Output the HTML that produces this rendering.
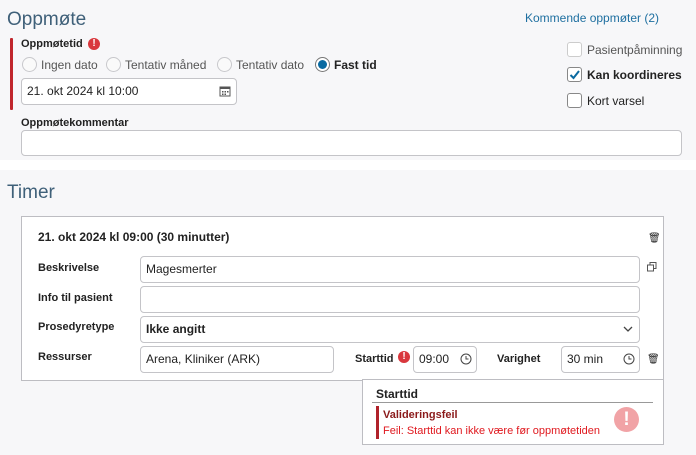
<!DOCTYPE html><html><head><style>
*{box-sizing:border-box;margin:0;padding:0}
body{width:696px;height:455px;background:#fff;font-family:"Liberation Sans",sans-serif;font-size:12px;color:#222;position:relative;overflow:hidden}
.sec{position:absolute;left:0;width:696px;background:#f7f7f9}
.a{position:absolute;white-space:nowrap}
.h{font-size:19px;color:#3f6079}
.b{font-weight:bold}
.in{position:absolute;background:#fff;border:1px solid #c4c4c8;border-radius:4px;height:27px;line-height:25px;padding-left:5px;font-size:12px}
.rad{position:absolute;width:15px;height:15px;border:1px solid #c8c8cc;border-radius:50%;background:#fafafa}
.cb{position:absolute;width:15px;height:15px;border:1px solid #888;border-radius:3px;background:#fff}
.err{position:absolute;width:12px;height:12px;border-radius:50%;background:#d9373d;color:#fff;font-size:10px;font-weight:bold;text-align:center;line-height:12px}
</style></head><body>
<div class="sec" style="top:0;height:160px"></div>
<div class="sec" style="top:170px;height:285px"></div>
<div class="a h" style="left:7px;top:9px">Oppmøte</div>
<div class="a" style="left:525px;top:11px;color:#1e6fa0">Kommende oppmøter (2)</div>
<div class="a" style="left:10px;top:38px;width:3px;height:72px;background:#c0262d;border-radius:1px"></div>
<div class="a b" style="left:21px;top:38px;font-size:11px">Oppmøtetid</div>
<div class="err" style="left:88px;top:38px">!</div>
<div class="rad" style="left:22px;top:57px"></div><div class="a" style="left:41px;top:58px;color:#555">Ingen dato</div>
<div class="rad" style="left:106px;top:57px"></div><div class="a" style="left:125px;top:58px;color:#555">Tentativ måned</div>
<div class="rad" style="left:217px;top:57px"></div><div class="a" style="left:236px;top:58px;color:#555">Tentativ dato</div>
<div class="rad" style="left:315px;top:57px;border-color:#777;background:#fff"><div style="position:absolute;left:2px;top:2px;width:9px;height:9px;border-radius:50%;background:#0a6aa1"></div></div>
<div class="a b" style="left:334px;top:58px">Fast tid</div>
<div class="in" style="left:21px;top:78px;width:216px">21. okt 2024 kl 10:00</div>
<svg class="a" style="left:219px;top:85px" width="12" height="12" viewBox="0 0 12 12"><rect x="1" y="2" width="10" height="9" fill="none" stroke="#555"/><rect x="1" y="2" width="10" height="2" fill="#555"/><g fill="#555"><rect x="3" y="6" width="1.5" height="1.5"/><rect x="5.5" y="6" width="1.5" height="1.5"/><rect x="8" y="6" width="1.5" height="1.5"/><rect x="3" y="8.5" width="1.5" height="1.5"/><rect x="5.5" y="8.5" width="1.5" height="1.5"/></g></svg>
<div class="cb" style="left:567px;top:42px;border-color:#ccc"></div><div class="a" style="left:587px;top:43px;color:#555">Pasientpåminning</div>
<div class="cb" style="left:567px;top:67px"><svg width="13" height="13" style="position:absolute;left:0;top:0"><path d="M2.5 7 L5.5 10 L11 3" fill="none" stroke="#0a6aa1" stroke-width="2"/></svg></div><div class="a b" style="left:587px;top:68px">Kan koordineres</div>
<div class="cb" style="left:567px;top:93px"></div><div class="a" style="left:587px;top:94px">Kort varsel</div>
<div class="a b" style="left:21px;top:117px;font-size:11px">Oppmøtekommentar</div>
<div class="in" style="left:21px;top:130px;width:661px;height:26px"></div>
<div class="a h" style="left:7px;top:182px">Timer</div>
<div class="a" style="left:21px;top:216px;width:643px;height:165px;background:#fff;border:1px solid #bdbdc2"></div>
<div class="a b" style="left:38px;top:230px">21. okt 2024 kl 09:00 (30 minutter)</div>
<div class="a" style="left:648px;top:233px;font-size:10px">🗑</div>
<div class="a b" style="left:38px;top:262px;font-size:11px">Beskrivelse</div>
<div class="in" style="left:140px;top:256px;width:500px">Magesmerter</div>
<svg class="a" style="left:647px;top:262px" width="10" height="10"><rect x="3" y="0.5" width="6" height="6" fill="none" stroke="#555"/><rect x="0.5" y="3" width="6" height="6" fill="#fff" stroke="#555"/></svg>
<div class="a b" style="left:38px;top:292px;font-size:11px">Info til pasient</div>
<div class="in" style="left:140px;top:286px;width:500px"></div>
<div class="a b" style="left:38px;top:321px;font-size:11px">Prosedyretype</div>
<div class="in b" style="left:140px;top:316px;width:500px">Ikke angitt</div>
<svg class="a" style="left:623px;top:325px" width="10" height="8"><path d="M1 2 L5 6 L9 2" fill="none" stroke="#444" stroke-width="1.3"/></svg>
<div class="a b" style="left:38px;top:351px;font-size:11px">Ressurser</div>
<div class="in" style="left:140px;top:346px;width:194px">Arena, Kliniker (ARK)</div>
<div class="a b" style="left:355px;top:353px;font-size:11px">Starttid</div>
<div class="err" style="left:398px;top:351px">!</div>
<div class="in" style="left:413px;top:346px;width:64px">09:00</div>
<div class="a b" style="left:497px;top:353px;font-size:11px">Varighet</div>
<div class="in" style="left:561px;top:346px;width:79px">30 min</div>
<svg class="a" style="left:460px;top:353px" width="12" height="12"><circle cx="6" cy="6" r="5" fill="none" stroke="#444"/><path d="M6 3V6H8.5" fill="none" stroke="#444"/></svg>
<svg class="a" style="left:623px;top:353px" width="12" height="12"><circle cx="6" cy="6" r="5" fill="none" stroke="#444"/><path d="M6 3V6H8.5" fill="none" stroke="#444"/></svg>
<div class="a" style="left:647px;top:354px;font-size:10px">🗑</div>
<div class="a" style="left:362px;top:379px;width:302px;height:66px;background:#fff;border:1px solid #bdbdc2"></div>
<div class="a b" style="left:376px;top:387px">Starttid</div>
<div class="a" style="left:372px;top:402px;width:281px;height:1px;background:#999"></div>
<div class="a" style="left:376px;top:406px;width:3px;height:33px;background:#b0222a"></div>
<div class="a b" style="left:383px;top:409px;color:#8b1a1a;font-size:11px">Valideringsfeil</div>
<div class="a" style="left:383px;top:425px;color:#e0191f;font-size:11px">Feil: Starttid kan ikke være før oppmøtetiden</div>
<div class="a" style="left:614px;top:407px;width:25px;height:25px;border-radius:50%;background:#f1a3a6;color:#fff;font-weight:bold;font-size:19px;text-align:center;line-height:25px">!</div>
</body></html>
